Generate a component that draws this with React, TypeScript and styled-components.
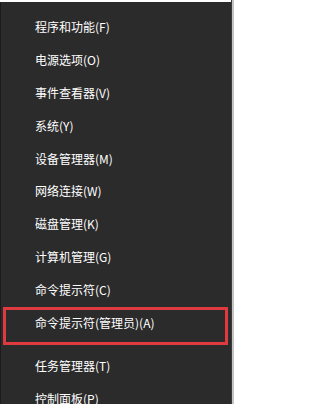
import styled, { createGlobalStyle } from 'styled-components';

const GlobalStyle = createGlobalStyle`
	html, body {
		margin: 0;
		padding: 0;
		background: #ffffff;
	}
`;

type Entry = { label: string; marked?: boolean; groupStart?: boolean };

const entries: Entry[] = [
	{ label: '程序和功能(F)' },
	{ label: '电源选项(O)' },
	{ label: '事件查看器(V)' },
	{ label: '系统(Y)' },
	{ label: '设备管理器(M)' },
	{ label: '网络连接(W)' },
	{ label: '磁盘管理(K)' },
	{ label: '计算机管理(G)' },
	{ label: '命令提示符(C)' },
	{ label: '命令提示符(管理员)(A)', marked: true },
	{ label: '任务管理器(T)', groupStart: true },
	{ label: '控制面板(P)' },
	{ label: '文件资源管理器(E)' },
];

function App() {
	return (
		<>
			<GlobalStyle />
			<Screen>
				<Menu>
					{entries.map((entry) => (
						<Item key={entry.label} $groupStart={entry.groupStart}>
							{entry.label}
							{entry.marked && <Highlight />}
						</Item>
					))}
				</Menu>
				<EdgeStrip />
			</Screen>
		</>
	);
}

const Screen = styled.div`
	display: flex;
	width: 234px;
	height: 404px;
	overflow: hidden;
	background: #ffffff;
`;

const Menu = styled.ul`
	flex: 1;
	display: flex;
	flex-direction: column;
	margin: 2px 0 0;
	padding: 9px 0 0;
	list-style: none;
	background: #2b2b2b;
	border-left: 1px solid #1c1c1c;
`;

const Item = styled.li<{ $groupStart?: boolean }>`
	position: relative;
	flex: none;
	height: 32.9px;
	line-height: 32.9px;
	margin-top: ${(p) => (p.$groupStart ? '10px' : '0')};
	padding-left: 34px;
	color: #ffffff;
	font-family: 'Noto Sans CJK SC', 'Noto Sans', sans-serif;
	font-size: 12px;
	white-space: nowrap;
`;

const Highlight = styled.span`
	position: absolute;
	left: 2px;
	top: 0;
	width: 225px;
	height: 38px;
	box-sizing: border-box;
	border: 3px solid #df3a40;
	pointer-events: none;
`;

const EdgeStrip = styled.div`
	flex: none;
	width: 2px;
	background: #c4c4c4;
	border-left: 1px solid #3a3a3a;
`;

export default App;
